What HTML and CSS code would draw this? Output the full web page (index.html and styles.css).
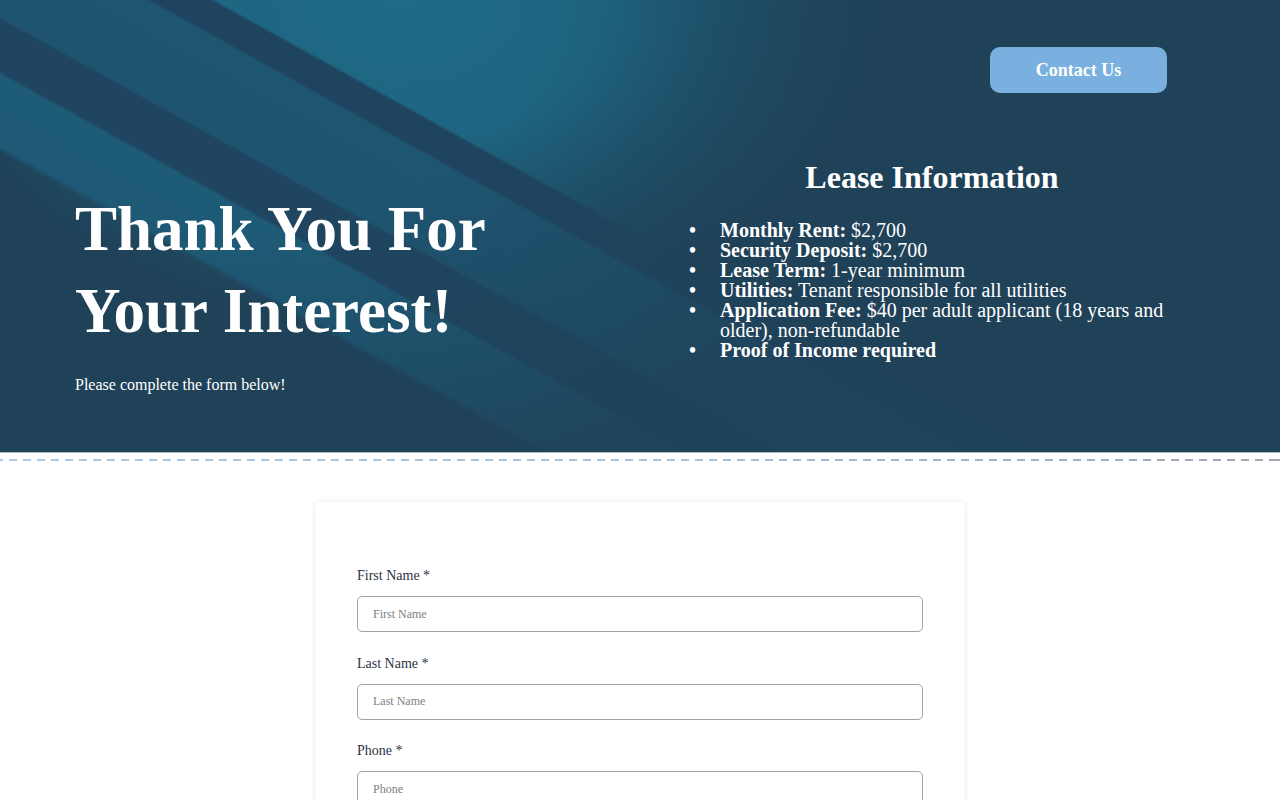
FILE: index.html
```html
<!DOCTYPE html>
<html lang="en">
<head>
<meta charset="utf-8">
<title>Thank You For Your Interest!</title>
<link rel="stylesheet" href="styles.css">
</head>
<body>
<header class="hero">
  <div class="topbar">
    <a class="contact-btn" href="#">Contact Us</a>
  </div>
  <div class="hero-body">
    <div class="intro">
      <h1 class="intro-title">Thank You For Your Interest!</h1>
      <p class="intro-sub">Please complete the form below!</p>
    </div>
    <div class="lease">
      <h2 class="lease-title">Lease Information</h2>
      <ul class="lease-list">
        <li><strong>Monthly Rent:</strong> $2,700</li>
        <li><strong>Security Deposit:</strong> $2,700</li>
        <li><strong>Lease Term:</strong> 1-year minimum</li>
        <li><strong>Utilities:</strong> Tenant responsible for all utilities</li>
        <li><strong>Application Fee:</strong> $40 per adult applicant (18 years and older), non-refundable</li>
        <li><strong>Proof of Income required</strong></li>
      </ul>
    </div>
  </div>
</header>
<div class="divider"></div>
<main class="form-wrap">
  <form class="form-card">
    <div class="field">
      <label class="field-label" for="fn">First Name *</label>
      <input class="field-input" id="fn" type="text" placeholder="First Name">
    </div>
    <div class="field">
      <label class="field-label" for="ln">Last Name *</label>
      <input class="field-input" id="ln" type="text" placeholder="Last Name">
    </div>
    <div class="field">
      <label class="field-label" for="ph">Phone *</label>
      <input class="field-input" id="ph" type="text" placeholder="Phone">
    </div>
    <div class="field">
      <label class="field-label" for="em">Email *</label>
      <input class="field-input" id="em" type="text" placeholder="Email">
    </div>
  </form>
</main>
</body>
</html>
```

FILE: styles.css
```css
* { box-sizing: border-box; }

body {
  margin: 0;
  background: #ffffff;
  font-family: "Liberation Serif", "Times New Roman", serif;
  color: #ffffff;
}

.hero {
  height: 453px;
  padding: 47px 96px 0 75px;
  border-bottom: 1px solid #aebbc5;
  background:
    radial-gradient(ellipse 780px 520px at 200px 0px, rgba(31,66,89,0) 45%, rgba(31,66,89,.9) 100%),
    linear-gradient(29deg, rgba(31,66,89,0) 0, rgba(31,66,89,0) 262px, #1e5a76 268px, #1e5b77 330px, #1f4561 333px, #1f4561 378px, #1e5470 381px, #1e5571 466px, #1f4460 469px, #1f4460 497px, rgba(31,66,89,0) 500px),
    radial-gradient(ellipse 470px 320px at 400px 0px, #1e6b85 0%, #1e6581 45%, rgba(31,66,89,0) 100%),
    #1f4259;
}

.topbar {
  display: flex;
  justify-content: flex-end;
  padding-right: 17px;
}

.contact-btn {
  display: flex;
  align-items: center;
  justify-content: center;
  width: 177px;
  height: 46px;
  border-radius: 10px;
  background: #7ab0e0;
  color: #ffffff;
  font-size: 18px;
  font-weight: bold;
  text-decoration: none;
}

.hero-body {
  display: grid;
  grid-template-columns: 605px 504px;
  align-items: start;
  margin-top: 66px;
}

.intro { padding-top: 29px; }

.intro-title {
  max-width: 480px;
  margin: 0 0 24px;
  font-size: 63px;
  line-height: 82px;
  font-weight: bold;
}

.intro-sub {
  margin: 0;
  font-size: 16px;
}

.lease-title {
  margin: 0 0 24px;
  font-size: 32px;
  font-weight: bold;
  text-align: center;
}

.lease-list {
  margin: 0;
  padding-left: 40px;
  list-style: none;
  font-size: 20px;
  line-height: 20px;
}

.lease-list li { position: relative; }

.lease-list li::before {
  content: "\2022";
  position: absolute;
  left: -31px;
  top: 0;
  font-weight: bold;
}

.divider {
  height: 2px;
  margin-top: 6px;
  background: linear-gradient(90deg, #a7cbea 0%, #a5c3df 50%, #9fa9b3 100%);
  -webkit-mask-image: repeating-linear-gradient(90deg, #000 0 8px, transparent 8px 14px);
  mask-image: repeating-linear-gradient(90deg, #000 0 8px, transparent 8px 14px);
  -webkit-mask-position: -5px 0;
  mask-position: -5px 0;
}

.form-wrap {
  padding-top: 41px;
}

.form-card {
  width: 650px;
  margin: 0 auto;
  padding: 66px 42px 40px;
  background: #ffffff;
  border-radius: 4px;
  box-shadow: 0 0 6px rgba(0,0,0,0.09);
}

.field { margin-bottom: 23.5px; }

.field-label {
  display: block;
  margin-bottom: 12px;
  font-size: 14px;
  line-height: 16px;
  color: #2a3342;
}

.field-input {
  display: block;
  width: 100%;
  height: 36px;
  padding: 0 15px;
  border: 1px solid #a4a4a4;
  border-radius: 5px;
  font-family: "Liberation Serif", "Times New Roman", serif;
  font-size: 12px;
  color: #333;
  background: #fff;
}

.field-input::placeholder { color: #808080; }
```
